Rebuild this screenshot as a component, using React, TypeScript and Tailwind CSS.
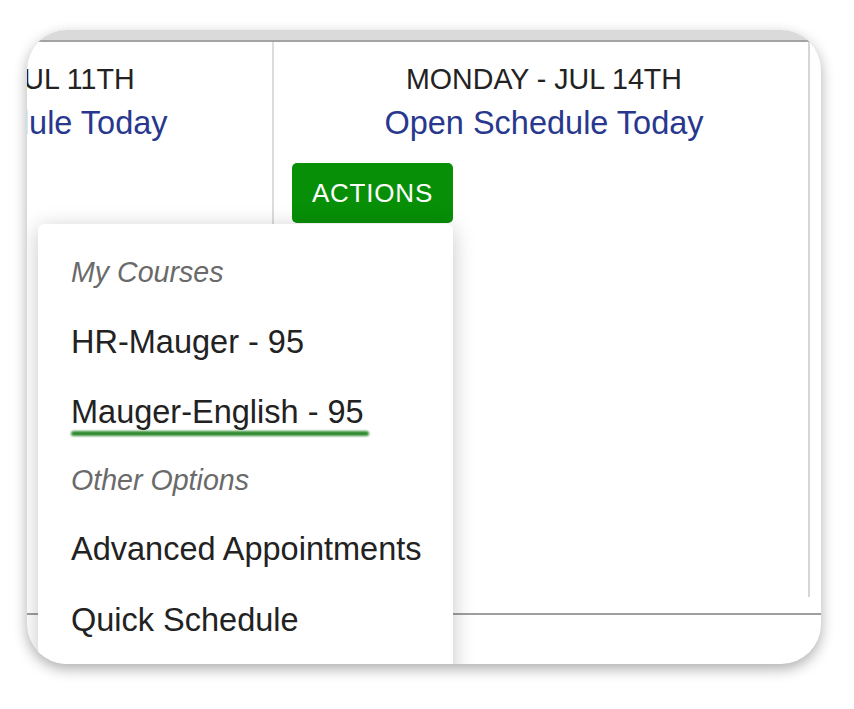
import React from 'react';

const font = { fontFamily: '"Liberation Sans", Arial, sans-serif' };

const DayColumn: React.FC<{ label: string; className?: string; showActions?: boolean }> = ({
  label,
  className = '',
  showActions,
}) => (
  <div className={`shrink-0 w-[536px] flex flex-col pt-[20px] pl-[6px] ${className}`}>
    <div className="text-center text-[28.6px] leading-[1.2] text-[#222]">{label}</div>
    <a className="mt-[8px] text-center text-[32.5px] leading-[1.2] text-[#28388e]">Open Schedule Today</a>
    {showActions && (
      <div className="mt-[20px] pl-[12px]">
        <button className="h-[60px] w-[161px] rounded-[5px] bg-[#078f07] text-white text-[26px] tracking-[0.8px]">
          ACTIONS
        </button>
      </div>
    )}
  </div>
);

export default function App() {
  return (
    <div className="min-h-[709px] bg-white pt-[30px] pl-[27px]" style={font}>
      <div className="relative w-[794px] h-[634px] rounded-[40px] overflow-hidden bg-white flex flex-col shadow-[0_5px_14px_rgba(0,0,0,0.32)]">
        <div className="h-[12px] shrink-0 bg-[#dadada] border-b-2 border-[#a3a3a3]" />

        <div className="h-[571px] shrink-0 flex">
          <DayColumn label="FRIDAY - JUL 11TH" className="-ml-[289px] border-r-2 border-[#dcdcdc]" />
          <DayColumn label="MONDAY - JUL 14TH" className="h-[555px] border-r-2 border-[#d6d6d6]" showActions />
        </div>

        <div className="flex-1 border-t-2 border-[#9f9f9f]" />

        {/* dropdown */}
        <div className="absolute left-[11px] top-[194px] w-[415px] h-[470px] bg-white rounded-t-[6px] shadow-[0_4px_22px_rgba(0,0,0,0.22)] pt-[13px] pl-[33px]">
          <div className="h-[70px] leading-[70px] text-[28.6px] italic text-[#6a6a6a]">My Courses</div>
          <div className="h-[70px] leading-[70px] text-[32.5px] text-[#222]">HR-Mauger - 95</div>
          <div className="relative h-[70px] leading-[70px] text-[32.5px] text-[#222]">
            Mauger-English - 95
            <span className="absolute left-0 top-[54px] w-[298px] h-[5px] rounded-full bg-[#2f8a2f] blur-[0.8px]" />
          </div>
          <div className="h-[67px] leading-[67px] text-[28.6px] italic text-[#6a6a6a]">Other Options</div>
          <div className="h-[70px] leading-[70px] text-[32.5px] text-[#222]">Advanced Appointments</div>
          <div className="h-[70px] leading-[72px] text-[32.5px] text-[#222]">Quick Schedule</div>
        </div>
      </div>
    </div>
  );
}
